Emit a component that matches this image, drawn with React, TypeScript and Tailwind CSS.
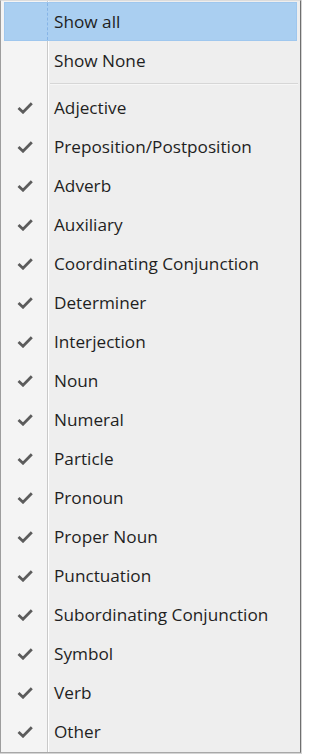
import React from "react";

const items = [
  "Adjective",
  "Preposition/Postposition",
  "Adverb",
  "Auxiliary",
  "Coordinating Conjunction",
  "Determiner",
  "Interjection",
  "Noun",
  "Numeral",
  "Particle",
  "Pronoun",
  "Proper Noun",
  "Punctuation",
  "Subordinating Conjunction",
  "Symbol",
  "Verb",
  "Other",
];

function Check() {
  return (
    <svg width="16" height="12" viewBox="0 0 16 12" className="text-[#5c5c5c]">
      <path
        d="M1.5 6 L6 10.2 L14.8 1.2"
        fill="none"
        stroke="currentColor"
        strokeWidth="2.8"
        strokeLinejoin="miter"
      />
    </svg>
  );
}

function Row({ label, checked }: { label: string; checked?: boolean }) {
  return (
    <div className="flex h-[39px] items-center">
      <div className="flex w-[47px] shrink-0 items-center justify-center pl-[1px]">
        {checked && <Check />}
      </div>
      <span className="pl-[6px]">{label}</span>
    </div>
  );
}

export default function App() {
  return (
    <div className="h-[754px] w-[302px] overflow-hidden bg-[#d4d4d4]">
      <div
        className="h-[753px] w-[301px] border-l border-t border-r border-b border-l-[#9d9d9d] border-t-[#dcdcdc] border-r-[#6f6f6f] border-b-[#a8a8a8] bg-[linear-gradient(90deg,#f4f4f4_0_46px,#c9c9c9_46px_47px,#ffffff_47px_48px,#eeeeee_48px)] pt-[1px] text-[17.2px] text-[#1f1f1f]"
        style={{ fontFamily: '"Segoe UI", "Open Sans", "Noto Sans", sans-serif' }}
      >
        {/* highlighted entry */}
        <div className="mx-[3px] flex h-[39px] items-center border border-[#9fc7ee] bg-[#aacff1]">
          <div className="h-full w-[43px] shrink-0 border-r border-dashed border-r-[#86b4e6]" />
          <span className="pl-[6px]">Show all</span>
        </div>
        <Row label="Show None" />
        <div className="flex h-[8px] items-center">
          <div className="ml-[49px] mr-[2px] h-[2px] flex-1 border-t border-b border-t-[#d6d6d6] border-b-[#f6f6f6]" />
        </div>
        {items.map((it) => (
          <Row key={it} label={it} checked />
        ))}
      </div>
    </div>
  );
}
